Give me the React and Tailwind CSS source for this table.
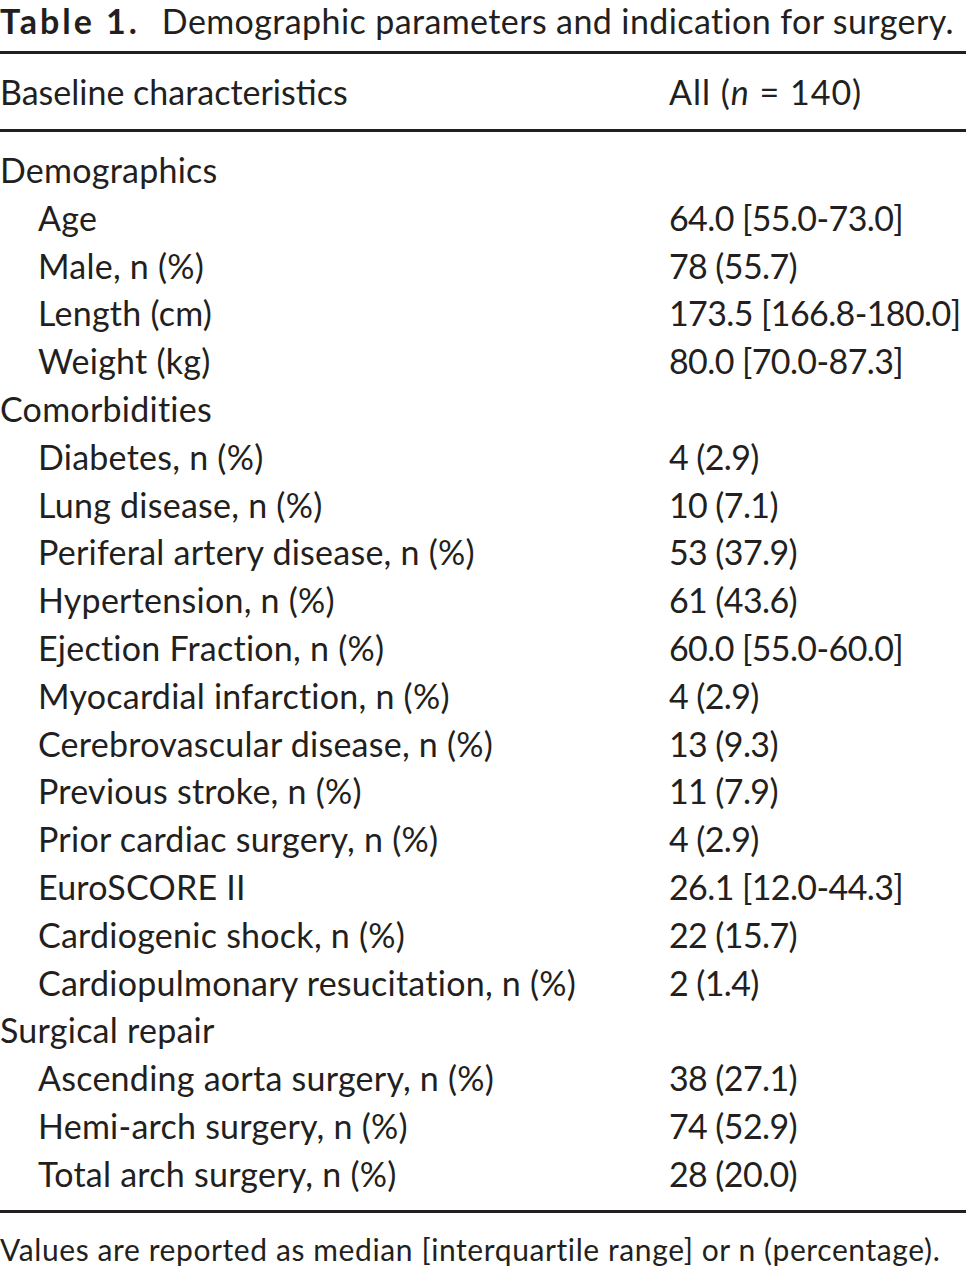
import React from 'react';

const rows = [
  { label: 'Demographics', group: true },
  { label: 'Age', value: '64.0 [55.0-73.0]' },
  { label: 'Male, n (%)', value: '78 (55.7)' },
  { label: 'Length (cm)', value: '173.5 [166.8-180.0]' },
  { label: 'Weight (kg)', value: '80.0 [70.0-87.3]' },
  { label: 'Comorbidities', group: true },
  { label: 'Diabetes, n (%)', value: '4 (2.9)' },
  { label: 'Lung disease, n (%)', value: '10 (7.1)' },
  { label: 'Periferal artery disease, n (%)', value: '53 (37.9)' },
  { label: 'Hypertension, n (%)', value: '61 (43.6)' },
  { label: 'Ejection Fraction, n (%)', value: '60.0 [55.0-60.0]' },
  { label: 'Myocardial infarction, n (%)', value: '4 (2.9)' },
  { label: 'Cerebrovascular disease, n (%)', value: '13 (9.3)' },
  { label: 'Previous stroke, n (%)', value: '11 (7.9)' },
  { label: 'Prior cardiac surgery, n (%)', value: '4 (2.9)' },
  { label: 'EuroSCORE II', value: '26.1 [12.0-44.3]' },
  { label: 'Cardiogenic shock, n (%)', value: '22 (15.7)' },
  { label: 'Cardiopulmonary resucitation, n (%)', value: '2 (1.4)' },
  { label: 'Surgical repair', group: true },
  { label: 'Ascending aorta surgery, n (%)', value: '38 (27.1)' },
  { label: 'Hemi-arch surgery, n (%)', value: '74 (52.9)' },
  { label: 'Total arch surgery, n (%)', value: '28 (20.0)' },
];

export default function App() {
  return (
    <div className="w-[966px] h-[1268px] bg-white text-[#231f20] font-['Lato',sans-serif] text-[34px] overflow-hidden">
      {/* Caption */}
      <div className="h-[51px] leading-[41px] whitespace-nowrap">
        <span className="font-bold tracking-[3px]">Table 1.</span>
        <span className="ml-[22px] tracking-[0.4px]">Demographic parameters and indication for surgery.</span>
      </div>

      <div className="border-t-[3px] border-[#231f20]" />

      {/* Header */}
      <div className="grid grid-cols-[669px_1fr] h-[75px] items-center whitespace-nowrap">
        <div>Baseline characteristics</div>
        <div className="tracking-[1px]">
          All (<span className="italic">n</span> = 140)
        </div>
      </div>

      <div className="border-t-[3px] border-[#231f20]" />

      {/* Body */}
      <div className="pt-[12px] pb-[14px]">
        {rows.map((r) => (
          <div key={r.label} className="grid grid-cols-[669px_1fr] h-[47.8px] items-center whitespace-nowrap">
            <div className={r.group ? 'tracking-[0.25px]' : 'pl-[38px] tracking-[0.25px]'}>{r.label}</div>
            <div className="tracking-[-0.6px]">{r.value}</div>
          </div>
        ))}
      </div>

      <div className="border-t-[3px] border-[#231f20]" />

      <div className="pt-[21px] text-[30px] leading-[30px] tracking-[0.6px] whitespace-nowrap">
        Values are reported as median [interquartile range] or n (percentage).
      </div>
    </div>
  );
}
